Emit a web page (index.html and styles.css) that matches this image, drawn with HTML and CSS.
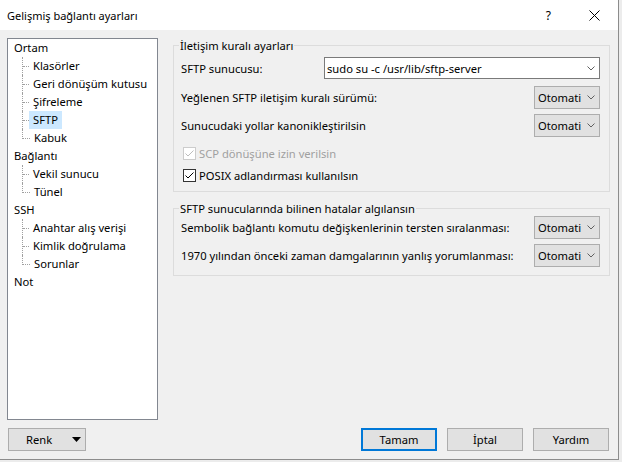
FILE: index.html
```html
<!DOCTYPE html>
<html lang="tr">
<head>
    <meta charset="UTF-8">
    <title>Gelişmiş bağlantı ayarları</title>
    <link rel="stylesheet" href="styles.css">
</head>
<body>
<div class="window">
    <div class="titlebar">
        <span class="title">Gelişmiş bağlantı ayarları</span>
        <span class="help">?</span>
        <svg class="close" width="11" height="11" viewBox="0 0 11 11">
            <path d="M0.5 0.5 L10.5 10.5 M10.5 0.5 L0.5 10.5" stroke="#000" stroke-width="1" fill="none"/>
        </svg>
    </div>

    <div class="body">
        <!-- left tree -->
        <div class="tree">
            <div class="node">Ortam</div>
            <ul class="children">
                <li><span class="label">Klasörler</span></li>
                <li><span class="label">Geri dönüşüm kutusu</span></li>
                <li><span class="label">Şifreleme</span></li>
                <li><span class="label selected">SFTP</span></li>
                <li><span class="label">Kabuk</span></li>
            </ul>
            <div class="node">Bağlantı</div>
            <ul class="children">
                <li><span class="label">Vekil sunucu</span></li>
                <li><span class="label">Tünel</span></li>
            </ul>
            <div class="node">SSH</div>
            <ul class="children">
                <li><span class="label">Anahtar alış verişi</span></li>
                <li><span class="label">Kimlik doğrulama</span></li>
                <li><span class="label">Sorunlar</span></li>
            </ul>
            <div class="node">Not</div>
        </div>

        <!-- settings pane -->
        <div class="pane">
            <fieldset class="group group-protocol">
                <legend>İletişim kuralı ayarları</legend>
                <div class="row row-server">
                    <span>SFTP sunucusu:</span>
                    <div class="combo combo-edit">
                        <span class="combo-text">sudo su -c /usr/lib/sftp-server</span>
                        <svg class="chevron" width="8" height="5" viewBox="0 0 8 5"><polyline points="0.5,0.5 4,4 7.5,0.5" fill="none" stroke="#606060"/></svg>
                    </div>
                </div>
                <div class="row row-version">
                    <span>Yeğlenen SFTP iletişim kuralı sürümü:</span>
                    <div class="combo">
                        <span class="combo-text">Otomati</span>
                        <svg class="chevron" width="8" height="5" viewBox="0 0 8 5"><polyline points="0.5,0.5 4,4 7.5,0.5" fill="none" stroke="#606060"/></svg>
                    </div>
                </div>
                <div class="row row-canon">
                    <span>Sunucudaki yollar kanonikleştirilsin</span>
                    <div class="combo">
                        <span class="combo-text">Otomati</span>
                        <svg class="chevron" width="8" height="5" viewBox="0 0 8 5"><polyline points="0.5,0.5 4,4 7.5,0.5" fill="none" stroke="#606060"/></svg>
                    </div>
                </div>
                <div class="check check-scp disabled">
                    <span class="box">
                        <svg width="11" height="11" viewBox="0 0 11 11"><polyline points="1.5,5.5 4,8 9.5,2.5" fill="none" stroke="#bcbcbc"/></svg>
                    </span>
                    <span>SCP dönüşüne izin verilsin</span>
                </div>
                <div class="check check-posix">
                    <span class="box">
                        <svg width="11" height="11" viewBox="0 0 11 11"><polyline points="1.5,5.5 4,8 9.5,2.5" fill="none" stroke="#000"/></svg>
                    </span>
                    <span>POSIX adlandırması kullanılsın</span>
                </div>
            </fieldset>

            <fieldset class="group group-bugs">
                <legend>SFTP sunucularında bilinen hatalar algılansın</legend>
                <div class="row row-symlink">
                    <span>Sembolik bağlantı komutu değişkenlerinin tersten sıralanması:</span>
                    <div class="combo">
                        <span class="combo-text">Otomati</span>
                        <svg class="chevron" width="8" height="5" viewBox="0 0 8 5"><polyline points="0.5,0.5 4,4 7.5,0.5" fill="none" stroke="#606060"/></svg>
                    </div>
                </div>
                <div class="row row-1970">
                    <span>1970 yılından önceki zaman damgalarının yanlış yorumlanması:</span>
                    <div class="combo">
                        <span class="combo-text">Otomati</span>
                        <svg class="chevron" width="8" height="5" viewBox="0 0 8 5"><polyline points="0.5,0.5 4,4 7.5,0.5" fill="none" stroke="#606060"/></svg>
                    </div>
                </div>
            </fieldset>
        </div>
    </div>

    <div class="footer">
        <button class="btn btn-color">
            <span>Renk</span>
            <svg class="tri" width="9" height="5" viewBox="0 0 9 5"><polygon points="0,0 9,0 4.5,5" fill="#000"/></svg>
        </button>
        <div class="buttons">
            <button class="btn btn-default">Tamam</button>
            <button class="btn">İptal</button>
            <button class="btn">Yardım</button>
        </div>
    </div>
</div>
</body>
</html>
```

FILE: styles.css
```css
* {
    box-sizing: border-box;
}

html, body {
    margin: 0;
    padding: 0;
}

body {
    background-color: #ececec;
    font-family: "Noto Sans", sans-serif;
    font-size: 11.2px;
    color: #000;
}

.window {
    width: 619px;
    height: 460px;
    background-color: #f0f0f0;
    border-right: 1px solid #8c8c8c;
    border-bottom: 1px solid #8c8c8c;
    display: flex;
    flex-direction: column;
}

/* title bar */
.titlebar {
    height: 30px;
    flex: none;
    background-color: #fff;
    display: flex;
    align-items: center;
    padding: 0 18px 0 7px;
    font-size: 11px;
}

.title {
    flex: 1;
}

.help {
    margin-right: 38px;
    font-size: 12px;
}

.close {
    display: block;
}

/* main area */
.body {
    display: flex;
    gap: 15px;
    padding: 8px 8px 0 7px;
}

.tree {
    width: 151px;
    height: 382px;
    flex: none;
    background-color: #fff;
    border: 1px solid #828790;
}

.node {
    height: 18px;
    line-height: 18px;
    padding-left: 6px;
}

.children {
    list-style: none;
    margin: 0 0 0 14px;
    padding: 0;
}

.children li {
    display: flex;
    height: 18px;
    border-left: 1px dotted #a0a0a0;
}

.children li::before {
    content: "";
    width: 6px;
    height: 9px;
    border-bottom: 1px dotted #a0a0a0;
}

.children li:last-child {
    border-left: none;
}

.children li:last-child::before {
    width: 7px;
    border-left: 1px dotted #a0a0a0;
}

.label {
    line-height: 18px;
    padding: 0 4px;
}

.label.selected {
    background-color: #cce8ff;
}

/* group boxes */
.pane {
    flex: 1;
}

.group {
    margin: 0;
    border: 1px solid #dcdcdc;
    min-width: 0;
}

.group legend {
    line-height: 15px;
    padding: 0 1px;
    margin-left: -2px;
}

.group-protocol {
    padding: 4px 9px 6px 7px;
}

.group-bugs {
    margin-top: 9px;
    padding: 0 9px 8px 7px;
}

.row {
    display: flex;
    align-items: center;
    justify-content: space-between;
    height: 23px;
}

.row-server {
    height: 22px;
}

.row-version {
    margin-top: 7px;
}

.row-canon {
    margin-top: 5px;
}

.row-1970 {
    margin-top: 5px;
}

.combo {
    width: 66px;
    height: 23px;
    display: flex;
    align-items: center;
    padding-left: 3px;
    background-color: #e1e1e1;
    border: 1px solid #adadad;
}

.combo-edit {
    width: 276px;
    height: 22px;
    padding-left: 2px;
    background-color: #fff;
    border-color: #7a7a7a;
}

.combo-text {
    flex: 1;
    white-space: nowrap;
}

.chevron {
    display: block;
    margin-right: 4px;
}

/* checkboxes */
.check {
    display: flex;
    align-items: center;
    height: 20px;
    padding-left: 2px;
}

.check-scp {
    margin-top: 6px;
}

.check-posix {
    margin-top: 2px;
}

.box {
    width: 13px;
    height: 13px;
    border: 1px solid #333;
    background-color: #fff;
    margin-right: 3px;
}

.box svg {
    display: block;
}

.check.disabled {
    color: #a0a0a0;
}

.check.disabled .box {
    border-color: #cccccc;
}

/* bottom buttons */
.footer {
    display: flex;
    justify-content: space-between;
    padding: 8px 9px 0 8px;
}

.btn {
    font-family: "Noto Sans", sans-serif;
    font-size: 11.2px;
    color: #000;
    width: 76px;
    height: 23px;
    padding: 0;
    background-color: #e1e1e1;
    border: 1px solid #adadad;
    border-radius: 0;
}

.btn-default {
    border: 2px solid #0078d7;
}

.btn-color {
    width: 78px;
    display: flex;
    align-items: center;
    padding: 0 4px 0 17px;
}

.btn-color .tri {
    display: block;
    margin-left: auto;
}

.buttons {
    display: flex;
    gap: 10px;
}
```
